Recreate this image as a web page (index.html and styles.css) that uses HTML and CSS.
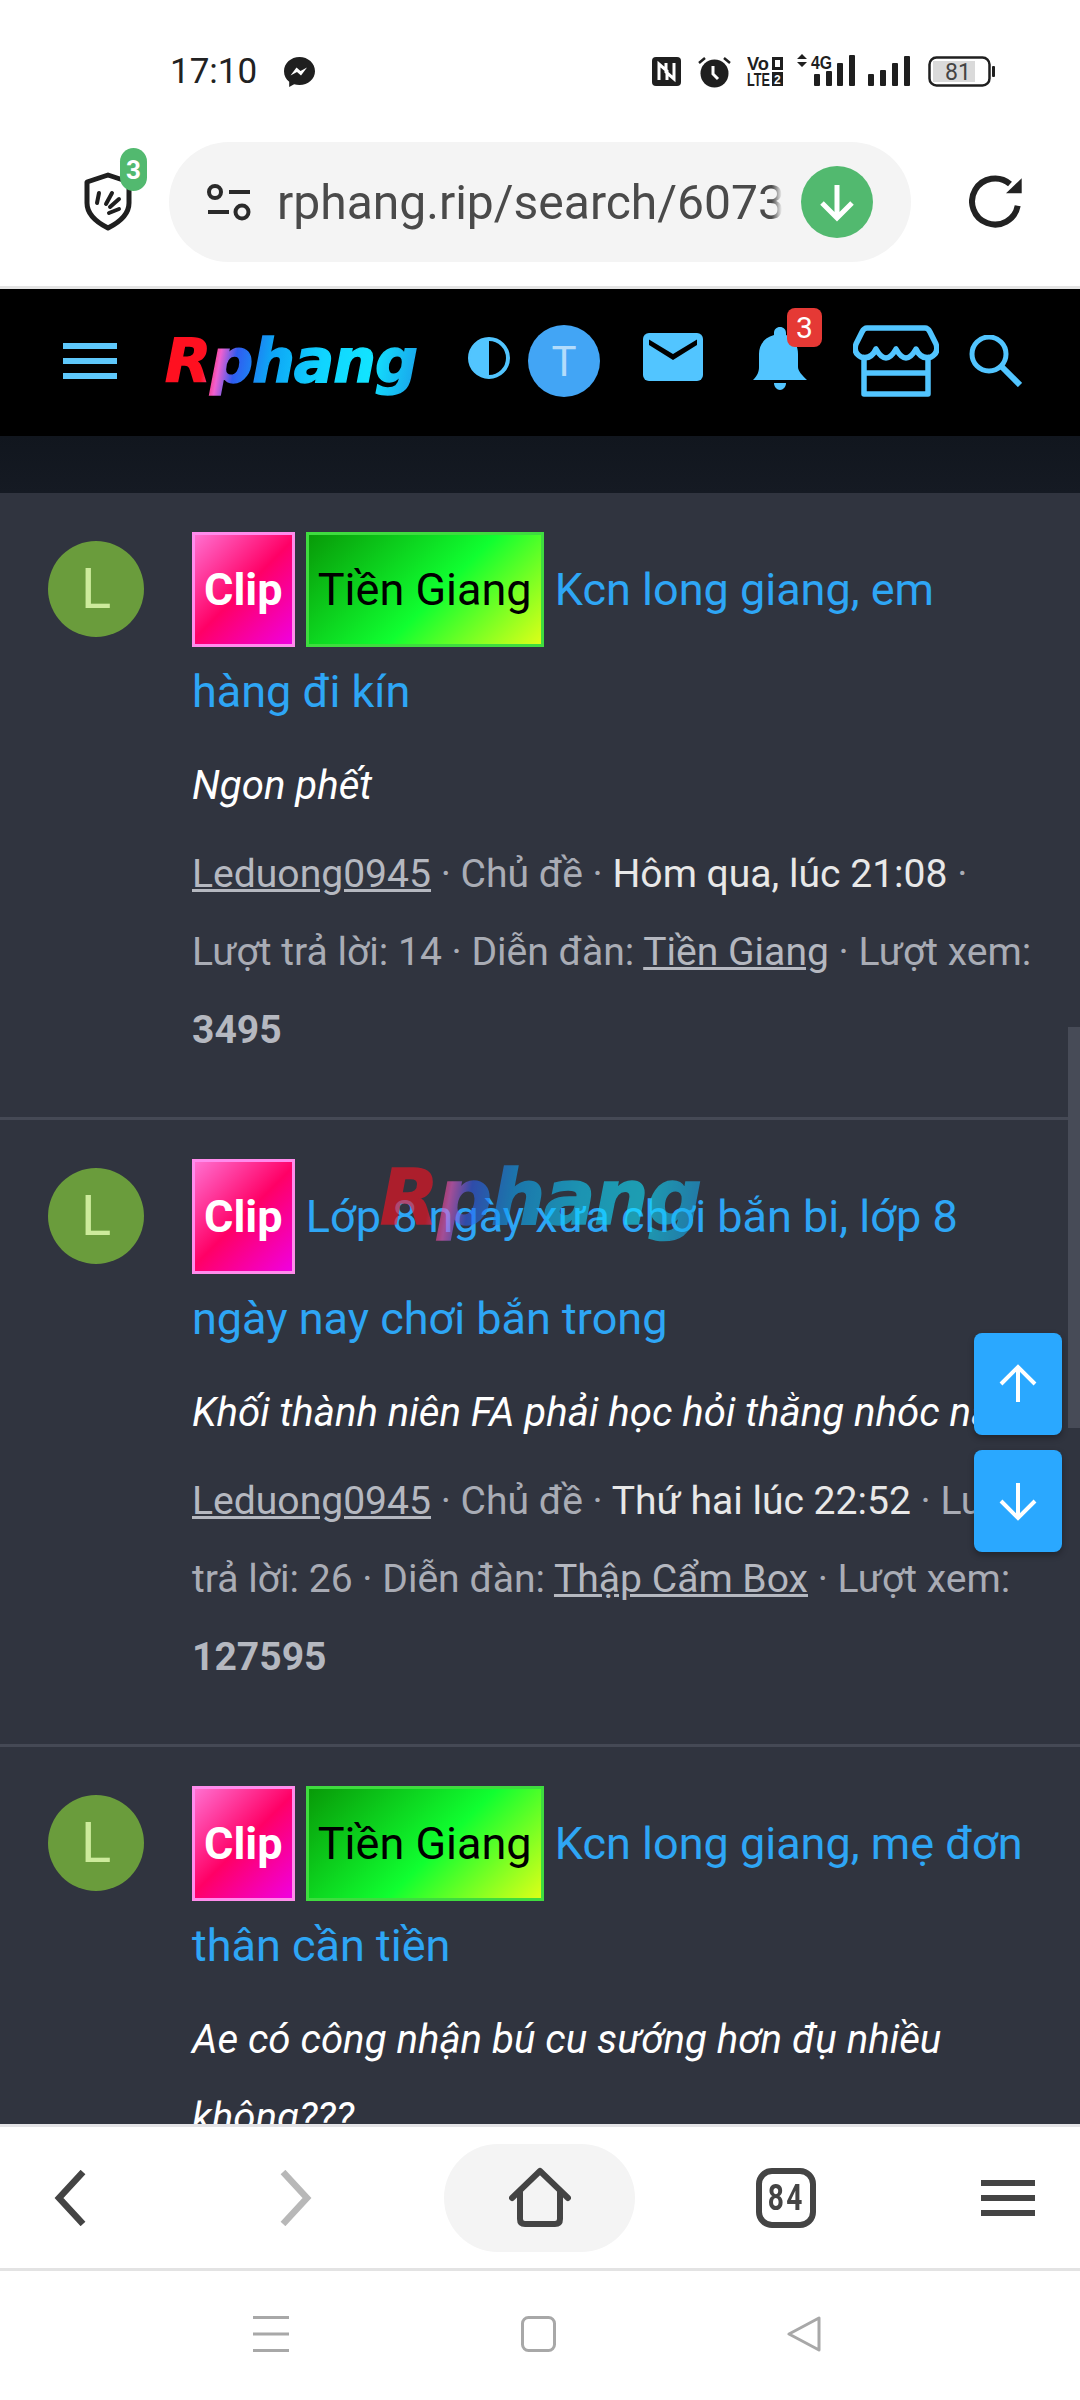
FILE: index.html
```html
<!DOCTYPE html>
<html lang="vi">
<head>
<meta charset="utf-8">
<title>Rphang</title>
<link rel="stylesheet" href="styles.css">
</head>
<body>
<div class="screen">
  <div class="status">
    <span class="time">17:10</span>
    <svg class="ic-msg" width="31" height="30" viewBox="0 0 31 30"><path d="M15.5 0C7 0 0 6.2 0 14.2c0 4.4 2 8 5.2 10.6V30l4.9-2.7c1.7.5 3.500.7 5.400.7C24 28 31 22 31 14.200 31 6.200 24 0 15.500 0z" fill="#1f1f1f"/><path d="M6.500 18.500l6-8 4 3.500 6.500-3.500-6 8-4-3.500z" fill="#fff"/></svg>
    <svg class="ic-nfc" width="29" height="29" viewBox="0 0 29 29"><rect width="29" height="29" rx="4" fill="#1f1f1f"/><path d="M7 23V7l8 7v9M22 6v16l-8-7V6" fill="none" stroke="#fff" stroke-width="3"/></svg>
    <svg class="ic-alarm" width="33" height="33" viewBox="0 0 33 33"><circle cx="16.500" cy="18.500" r="14" fill="#1f1f1f"/><path d="M1 8l6-5M32 8l-6-5" stroke="#1f1f1f" stroke-width="2.500"/><path d="M15 11v8l5 5" fill="none" stroke="#fff" stroke-width="3"/></svg>
    <svg class="ic-volte" width="36" height="29" viewBox="0 0 36 29"><g class="tiny"><text x="0" y="13" font-size="18" textLength="22" lengthAdjust="spacingAndGlyphs">Vo</text><text x="0" y="28.500" font-size="18" textLength="23" lengthAdjust="spacingAndGlyphs">LTE</text></g><rect x="25" y="0" width="11" height="13" fill="#1f1f1f"/><rect x="28" y="3" width="5" height="7" fill="#fff"/><rect x="25" y="15" width="11" height="14" fill="#1f1f1f"/><text x="27" y="27" font-size="12" class="tinyw">2</text></svg>
    <svg class="ic-sig1" width="58" height="32" viewBox="0 0 58 32"><path d="M5 0l5 5H0zM5 13L0 8h10z" fill="#1f1f1f"/><text class="tiny" x="14" y="14.500" font-size="19" textLength="21" lengthAdjust="spacingAndGlyphs">4G</text><rect x="17" y="20" width="6" height="12" rx="1" fill="#1f1f1f"/><rect x="29" y="17" width="6" height="15" rx="1" fill="#1f1f1f"/><rect x="40" y="9" width="6" height="23" rx="1" fill="#1f1f1f"/><rect x="52" y="1" width="6" height="31" rx="1" fill="#1f1f1f"/></svg>
    <svg class="ic-sig2" width="43" height="30" viewBox="0 0 43 30"><rect x="0" y="18" width="6" height="12" rx="1" fill="#1f1f1f"/><rect x="12" y="14" width="6" height="16" rx="1" fill="#1f1f1f"/><rect x="24" y="7" width="6" height="23" rx="1" fill="#1f1f1f"/><rect x="36" y="0" width="6" height="30" rx="1" fill="#1f1f1f"/></svg>
    <svg class="ic-batt" width="67" height="31" viewBox="0 0 67 31"><rect x="1.500" y="1.500" width="60" height="28" rx="7" fill="#fff" stroke="#1f1f1f" stroke-width="2.500"/><rect x="5" y="5" width="42" height="21" fill="#dadada"/><text x="17" y="24" font-size="23" class="batt-num">81</text><rect x="64" y="10" width="3" height="11" rx="1" fill="#1f1f1f"/></svg>
  </div>

  <div class="browser">
    <div class="shield-wrap">
      <svg width="48" height="59" viewBox="0 0 48 59"><path d="M24 3L45 10V31C45 43 34 51 24 56 14 51 3 43 3 31V10Z" fill="none" stroke="#1f1f1f" stroke-width="5" stroke-linejoin="round"/><path d="M15 21l-2 10M28 21l-6 11M35 27L26 35M35 37l-10 4" stroke="#1f1f1f" stroke-width="4" stroke-linecap="round"/></svg>
      <span class="shield-badge">3</span>
    </div>
    <div class="url">
      <svg class="tune" width="44" height="38" viewBox="0 0 44 38"><circle cx="8" cy="9" r="6" fill="none" stroke="#2a2a2a" stroke-width="4"/><path d="M22 9h21M1 29h21" stroke="#2a2a2a" stroke-width="4"/><circle cx="35" cy="29" r="6.500" fill="none" stroke="#2a2a2a" stroke-width="4"/></svg>
      <div class="url-text">rphang.rip/search/60738</div>
      <svg class="dl" width="72" height="72" viewBox="0 0 72 72"><circle cx="36" cy="36" r="36" fill="#52b96f"/><path d="M36 19v33M21 37l15 15 15-15" fill="none" stroke="#fff" stroke-width="5"/></svg>
    </div>
    <svg class="reload" width="54" height="54" viewBox="0 0 54 54"><path d="M41 9A23 23 0 1 0 48.700 30.700" fill="none" stroke="#222" stroke-width="6"/><path d="M52.700 3.300V18.300H37Z" fill="#222"/></svg>
  </div>

  <header class="site-head">
    <svg class="h-menu" width="54" height="36" viewBox="0 0 54 36"><path d="M0 3h54M0 18h54M0 33h54" stroke="#5ec8fb" stroke-width="6"/></svg>
    <span class="logo">Rphang</span>
    <svg class="h-half" width="42" height="42" viewBox="0 0 42 42"><circle cx="21" cy="21" r="19" fill="none" stroke="#52c5ff" stroke-width="4"/><path d="M21 2A19 19 0 0 0 21 40Z" fill="#52c5ff"/></svg>
    <span class="h-avatar">T</span>
    <svg class="h-mail" width="60" height="48" viewBox="0 0 60 48"><rect width="60" height="48" rx="6" fill="#52c5ff"/><path d="M6 6.500L30 21 54 6.500V12L30 27 6 12Z" fill="#000"/></svg>
    <div class="h-bell">
      <svg width="54" height="63" viewBox="0 0 54 63"><path fill="#52c5ff" d="M27 0c3.500 0 6 2.500 6 6v2c8 3 12 11 12 19v13c0 4 4 8 9 13H0c5-5 6-9 6-13V27c0-8 4-16 15-19V6c0-3.500 2.500-6 6-6z"/><path fill="#52c5ff" d="M21 56h12c0 4-3 7-6 7s-6-3-6-7z"/></svg>
      <span class="bell-badge">3</span>
    </div>
    <svg class="h-store" width="86" height="72" viewBox="0 0 86 72"><path d="M14 3H72Q75 3 77 7L83 19Q86 28 78 32 68 35 63 24 53 42 43 24 33 42 23 24 18 35 8 32 0 28 3 19L9 7Q11 3 14 3Z" fill="none" stroke="#52c5ff" stroke-width="5.500" stroke-linejoin="round"/><path d="M11 32V69H75V32M11 48H75" fill="none" stroke="#52c5ff" stroke-width="5.500" stroke-linejoin="round"/></svg>
    <svg class="h-search" width="53" height="52" viewBox="0 0 53 52"><circle cx="20" cy="19" r="17" fill="none" stroke="#52c5ff" stroke-width="5"/><path d="M33 32l18 18" stroke="#52c5ff" stroke-width="6"/></svg>
  </header>

  <div class="strip"></div>

  <main class="content">
    <article class="item">
      <div class="avatar">L</div>
      <div class="main">
        <h3 class="title"><span class="tag tag-clip">Clip</span> <span class="tag tag-tg">Tiền Giang</span> <a class="title-link">Kcn long giang, em hàng đi kín</a></h3>
        <p class="snippet">Ngon phết</p>
        <p class="meta"><a class="mlink">Leduong0945</a> · Chủ đề · <span class="date">Hôm qua, lúc 21:08</span> · Lượt trả lời: 14 · Diễn đàn: <a class="mlink">Tiền Giang</a> · Lượt xem: <b>3495</b></p>
      </div>
    </article>
    <article class="item">
      <div class="avatar">L</div>
      <div class="main">
        <h3 class="title"><span class="tag tag-clip">Clip</span> <a class="title-link">Lớp 8 ngày xưa chơi bắn bi, lớp 8 ngày nay chơi bắn trong</a></h3>
        <p class="snippet">Khối thành niên FA phải học hỏi thằng nhóc này</p>
        <p class="meta"><a class="mlink">Leduong0945</a> · Chủ đề · <span class="date">Thứ hai lúc 22:52</span> · Lượt trả lời: 26 · Diễn đàn: <a class="mlink">Thập Cẩm Box</a> · Lượt xem: <b>127595</b></p>
      </div>
    </article>
    <article class="item">
      <div class="avatar">L</div>
      <div class="main">
        <h3 class="title"><span class="tag tag-clip">Clip</span> <span class="tag tag-tg">Tiền Giang</span> <a class="title-link">Kcn long giang, mẹ đơn thân cần tiền</a></h3>
        <p class="snippet">Ae có công nhận bú cu sướng hơn đụ nhiều không???</p>
      </div>
    </article>

    <span class="logo watermark">Rphang</span>
    <div class="scrollbar"></div>
    <div class="scroll-btn btn-up"><svg width="40" height="40" viewBox="0 0 40 40"><path d="M20 38V3M3 20L20 3l17 17" fill="none" stroke="#fff" stroke-width="4"/></svg></div>
    <div class="scroll-btn btn-down"><svg width="40" height="40" viewBox="0 0 40 40"><path d="M20 2v35M3 20l17 17 17-17" fill="none" stroke="#fff" stroke-width="4"/></svg></div>
  </main>

  <nav class="toolbar">
    <svg class="t-back" width="33" height="56" viewBox="0 0 33 56"><path d="M29 2L5 28l24 26" fill="none" stroke="#444" stroke-width="6.500"/></svg>
    <svg class="t-fwd" width="33" height="56" viewBox="0 0 33 56"><path d="M4 2l24 26L4 54" fill="none" stroke="#b8b8b8" stroke-width="6.500"/></svg>
    <div class="t-home"><svg width="62" height="62" viewBox="0 0 62 62"><path d="M3 31L31 4l28 27" fill="none" stroke="#444" stroke-width="6" stroke-linecap="round" stroke-linejoin="round"/><path d="M11 24V52q0 5 5 5H46q5 0 5-5V24" fill="none" stroke="#444" stroke-width="6"/></svg></div>
    <div class="t-tabs"><span class="t-num">84</span></div>
    <svg class="t-menu" width="54" height="36" viewBox="0 0 54 36"><path d="M0 3h54M0 18h54M0 33h54" stroke="#444" stroke-width="6"/></svg>
  </nav>

  <div class="navbar">
    <svg class="n-menu" width="36" height="36" viewBox="0 0 36 36"><path d="M0 1.500h36M0 18h36M0 34.500h36" stroke="#a8a8a8" stroke-width="3"/></svg>
    <svg class="n-home" width="35" height="36" viewBox="0 0 35 36"><rect x="1.500" y="1.500" width="32" height="33" rx="6" fill="none" stroke="#a8a8a8" stroke-width="3"/></svg>
    <svg class="n-back" width="34" height="36" viewBox="0 0 34 36"><path d="M32 2V34L2 18Z" fill="none" stroke="#a8a8a8" stroke-width="3" stroke-linejoin="round"/></svg>
  </div>
</div>
</body>
</html>
```

FILE: styles.css
```css
* { box-sizing: border-box; }
html, body { margin: 0; padding: 0; }
body { font-family: Roboto, "Noto Sans", sans-serif; background: #fff; }
svg { display: block; flex: none; }

.screen { width: 1080px; height: 2400px; display: flex; flex-direction: column; overflow: hidden; background: #fff; }

/* status bar */
.status { height: 142px; flex: none; display: flex; align-items: center; padding-left: 170px; color: #222; }
.time { font-size: 35px; width: 87px; white-space: nowrap; }
.ic-msg { margin-left: 27px; margin-top: 2px; }
.ic-nfc { margin-left: 337px; }
.ic-alarm { margin-left: 17px; }
.ic-volte { margin-left: 16px; }
.ic-sig1 { margin-left: 14px; margin-top: -2px; }
.ic-sig2 { margin-left: 13px; }
.ic-batt { margin-left: 17px; }
.tiny { font-family: "Liberation Sans", sans-serif; font-weight: 700; fill: #1f1f1f; }
.tinyw { font-family: "Liberation Sans", sans-serif; font-weight: 700; fill: #fff; }
.batt-num { font-family: Roboto, sans-serif; fill: #444; }

/* browser bar */
.browser { height: 147px; flex: none; display: flex; align-items: flex-start; padding-left: 84px; border-bottom: 3px solid #e4e4e4; }
.shield-wrap { position: relative; width: 48px; height: 59px; margin-top: 30px; }
.shield-badge { position: absolute; left: 36px; top: -24px; width: 27px; height: 43px; border-radius: 14px; background: #52b96f; color: #fff; font-size: 26px; font-weight: 700; display: flex; align-items: center; justify-content: center; }
.url { width: 742px; height: 120px; margin-left: 37px; border-radius: 60px; background: #f4f4f4; display: flex; align-items: center; padding-left: 38px; }
.url-text { width: 505px; margin-left: 26px; font-size: 48px; color: #4a4a4a; white-space: nowrap; overflow: hidden; -webkit-mask-image: linear-gradient(90deg, #000 98%, transparent); mask-image: linear-gradient(90deg, #000 98%, transparent); }
.dl { margin-left: 19px; }
.reload { margin-left: 58px; margin-top: 33px; }

/* site header */
.site-head { height: 147px; flex: none; background: #000; display: flex; align-items: center; padding: 0 0 3px 63px; }
.logo { font-family: "DejaVu Sans", sans-serif; font-weight: 700; font-style: italic; font-size: 60px; line-height: 72px; letter-spacing: -1px; white-space: nowrap; -webkit-text-stroke: 1.5px transparent; background: linear-gradient(100deg, #ff1020 0, #ff1020 17%, #f060d0 23%, #2f5cf0 29%, #0ea4f5 42%, #10d4ff 62%, #12e4ff 80%, #1aa0ea 100%); -webkit-background-clip: text; background-clip: text; color: transparent; }
.site-head .logo { margin-left: 48px; width: 252px; }
.h-half { margin-left: 51px; margin-top: -6px; }
.h-avatar { margin-left: 18px; width: 72px; height: 72px; border-radius: 50%; background: #42a5f5; color: #b3dcfb; font-size: 42px; display: flex; align-items: center; justify-content: center; }
.h-mail { margin-left: 43px; margin-top: -8px; }
.h-bell { position: relative; margin-left: 50px; margin-top: -6px; }
.bell-badge { position: absolute; left: 34px; top: -19px; width: 35px; height: 39px; border-radius: 8px; background: #e53935; color: #fff; font-size: 30px; display: flex; align-items: center; justify-content: center; }
.h-store { margin-left: 46px; }
.h-search { margin-left: 30px; }

.strip { height: 57px; flex: none; background: linear-gradient(180deg, #11161e, #151a23); }

/* list */
.content { flex: 1; min-height: 0; position: relative; overflow: hidden; background: #30343f; }
.item { display: flex; gap: 48px; padding: 46px 45px 48px 48px; border-bottom: 3px solid #454955; }
.avatar { flex: none; width: 96px; height: 96px; margin-top: 2px; border-radius: 50%; background: #6a9c3c; color: #cdeb9c; font-size: 56px; display: flex; align-items: center; justify-content: center; }
.main { flex: 1; min-width: 0; }
.title { margin: 0; font-size: 45px; font-weight: 400; line-height: 102px; color: #2ea6f5; }
.title-link { color: #2ea6f5; }
.tag { padding: 28px 9px; border: 3px solid; }
.tag-clip { color: #fff; font-weight: 700; border-color: #ff8cec; background: linear-gradient(135deg, #ff70d0 0, #ff0066 50%, #f000e0 100%); }
.tag-tg { color: #000; border-color: #3fdc3f; background: linear-gradient(135deg, #089a08 0, #10ff30 55%, #dcff18 100%); }
.snippet { margin: 4px 0 10px; font-size: 40.2px; line-height: 78px; font-style: italic; color: #fff; }
.meta { margin: 0; font-size: 39.1px; line-height: 78px; color: #a9acb5; }
.mlink { color: #b5b8c0; text-decoration: underline; }
.date { color: #e8e8e8; }
.meta b { color: #b5b8c0; }

/* overlays */
.watermark { position: absolute; left: 380px; top: 660px; font-size: 76px; line-height: 90px; opacity: .6; }
.scrollbar { position: absolute; right: 0; top: 534px; width: 12px; height: 401px; background: #474b57; }
.scroll-btn { position: absolute; right: 18px; width: 88px; height: 102px; border-radius: 8px; background: #2aa8ff; box-shadow: 0 3px 6px rgba(0,0,0,.3); display: flex; align-items: center; justify-content: center; }
.btn-up { top: 840px; }
.btn-down { top: 957px; }

/* bottom toolbar */
.toolbar { height: 147px; flex: none; display: flex; align-items: center; padding-left: 54px; border-top: 3px solid #e3e3e6; border-bottom: 3px solid #e3e3e3; }
.t-fwd { margin-left: 192px; }
.t-home { margin-left: 132px; width: 191px; height: 108px; border-radius: 54px; background: #f4f4f4; display: flex; align-items: center; justify-content: center; }
.t-tabs { margin-left: 121px; width: 60px; height: 60px; border: 6px solid #444; border-radius: 16px; display: flex; align-items: center; justify-content: center; }
.t-num { font-size: 37px; font-weight: 700; color: #444; letter-spacing: 3px; transform: scaleX(.76); }
.t-menu { margin-left: 165px; }

/* system nav */
.navbar { height: 129px; flex: none; display: flex; align-items: flex-start; padding: 45px 0 0 253px; }
.n-home { margin-left: 232px; }
.n-back { margin-left: 231px; }
```
